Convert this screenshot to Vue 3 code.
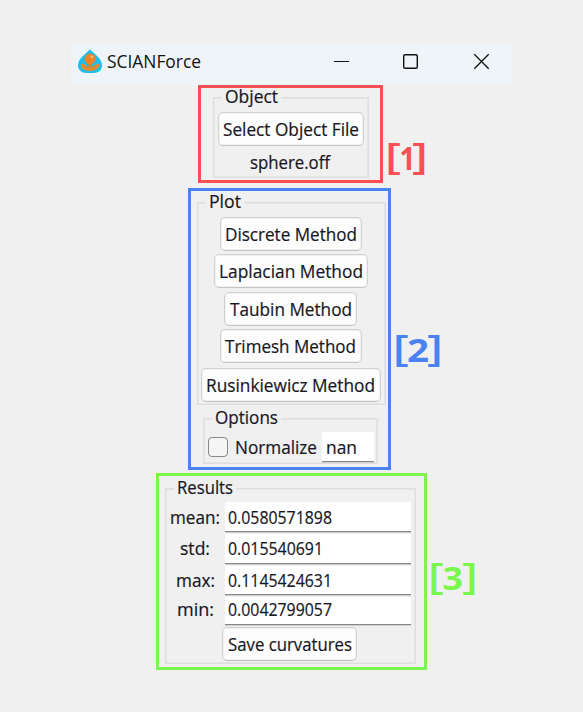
<script setup>
import { h } from 'vue'

// Text line fitted to a given width, baseline 18px below the top of a 24px line
const Line = (props) =>
  h('svg', { class: 'line', width: props.w, height: 24 }, [
    h('text', { x: 0, y: 18, textLength: props.w, lengthAdjust: 'spacingAndGlyphs' }, props.t),
  ])
Line.props = ['t', 'w']

const methods = [
  { name: 'Discrete Method', text: 132, width: 142, gap: 3 },
  { name: 'Laplacian Method', text: 144, width: 154, gap: 4 },
  { name: 'Taubin Method', text: 122, width: 133, gap: 3 },
  { name: 'Trimesh Method', text: 131, width: 142, gap: 5 },
  { name: 'Rusinkiewicz Method', text: 169, width: 180, gap: 0 },
]
const results = [
  { key: 'mean:', kw: 50, value: '0.0580571898', vw: 104, height: 32, pad: 4 },
  { key: 'std:', kw: 30, value: '0.015540691', vw: 95, height: 32, pad: 3 },
  { key: 'max:', kw: 39, value: '0.1145424631', vw: 104, height: 31, pad: 3 },
  { key: 'min:', kw: 37, value: '0.0042799057', vw: 104, height: 30, pad: 1 },
]
</script>

<template>
  <main class="page">
    <header class="titlebar">
      <svg class="logo" width="26" height="26" viewBox="0 0 26 26">
        <path d="M13 1C11.500 4 3 8.500 1.500 14.500C-.500 21 4 25 9 25h8c5 0 9.500-4 7.500-10.500C23 8.500 14.500 4 13 1Z" fill="#1cc0ee" />
        <path d="M4 16c2-1 4 .500 6 2.500h6c2-2 4-3.500 6-2.500 1 4-3 7-9 7s-10-3-9-7Z" fill="#e58d2c" />
        <path d="M11.300 14h3.400v5h-3.400Z" fill="#c98a3b" />
        <circle cx="13" cy="11" r="5.400" fill="#ee8424" />
        <path d="M7 18c2 2.300 10 2.300 12 0" fill="none" stroke="#b98a3d" stroke-width="0.800" />
        <circle cx="14.800" cy="9" r="1.400" fill="#f8b578" />
      </svg>
      <Line class="title" t="SCIANForce" :w="94" />
      <svg class="controls" width="156" height="16" viewBox="0 0 156 16">
        <path d="M0 7.500h15" />
        <rect x="69.700" y="0.700" width="13.600" height="13.600" rx="1.300" stroke-width="1.400" />
        <path d="M140.300.300l14.400 14.400M154.700.300l-14.400 14.400" stroke-width="1.300" />
      </svg>
    </header>

    <section class="row first">
      <div class="frame red">
        <div class="group object">
          <div class="legend"><Line t="Object" :w="53" /></div>
          <button class="btn select"><Line t="Select Object File" :w="136" /></button>
          <Line class="file" t="sphere.off" :w="80" />
        </div>
      </div>
      <svg class="tag tag1" width="46" height="40">
        <text class="br" x="-2" y="29" textLength="16" lengthAdjust="spacingAndGlyphs">[</text>
        <text x="12.500" y="30" textLength="16" lengthAdjust="spacingAndGlyphs">1</text>
        <text class="br" x="25" y="29" textLength="16" lengthAdjust="spacingAndGlyphs">]</text>
      </svg>
    </section>

    <section class="row second">
      <div class="frame blue">
        <div class="group plot">
          <div class="legend"><Line t="Plot" :w="32" /></div>
          <button v-for="m in methods" :key="m.name" class="btn method" :style="{ width: m.width + 'px', marginBottom: m.gap + 'px' }">
            <Line :t="m.name" :w="m.text" />
          </button>
        </div>
        <div class="group options">
          <div class="legend"><Line t="Options" :w="63" /></div>
          <span class="check"></span>
          <Line class="normalize" t="Normalize" :w="82" />
          <div class="field nan"><Line t="nan" :w="31" /></div>
        </div>
      </div>
      <svg class="tag tag2" width="50" height="40">
        <text class="br" x="-1.200" y="29" textLength="16" lengthAdjust="spacingAndGlyphs">[</text>
        <text x="13" y="30" textLength="22" lengthAdjust="spacingAndGlyphs">2</text>
        <text class="br" x="33" y="29" textLength="16" lengthAdjust="spacingAndGlyphs">]</text>
      </svg>
    </section>

    <section class="row third">
      <div class="frame green">
        <div class="group results">
          <div class="legend"><Line t="Results" :w="56" /></div>
          <div v-for="r in results" :key="r.key" class="result" :style="{ height: r.height + 'px', '--pad': r.pad + 'px' }">
            <div class="key"><Line :t="r.key" :w="r.kw" /></div>
            <div class="field"><Line :t="r.value" :w="r.vw" /></div>
          </div>
          <button class="btn save"><Line t="Save curvatures" :w="124" /></button>
        </div>
      </div>
      <svg class="tag tag3" width="50" height="40">
        <text class="br" x="-1.200" y="29" textLength="16" lengthAdjust="spacingAndGlyphs">[</text>
        <text x="13.500" y="30" textLength="20.500" lengthAdjust="spacingAndGlyphs">3</text>
        <text class="br" x="33" y="29" textLength="16" lengthAdjust="spacingAndGlyphs">]</text>
      </svg>
    </section>
  </main>
</template>

<style>
body { background: #f0f0f0; }
.line { display: block; flex: none; overflow: visible; }
.line text { font-family: "Open Sans", "Noto Sans", sans-serif; font-size: 18px; fill: #17171f; stroke: #17171f; stroke-width: 0.2px; }
.title text { stroke: none; fill: #111; }
.legend .line { margin-top: -10px; }
</style>

<style scoped>
.page { box-sizing: border-box; width: 583px; height: 712px; padding-top: 42px; background: #f0f0f0; overflow: hidden; }
.titlebar { display: flex; box-sizing: border-box; width: 441px; height: 43px; margin-left: 71px; padding-left: 6px; background: #eff4f8; box-shadow: 0 1px #eff3f6; }
.logo { margin-top: 6px; }
.title { margin: 8px 0 0 4px; }
.controls { margin: 12px 0 0 133px; fill: none; stroke: #111; stroke-width: 1; overflow: visible; }
.row { display: flex; align-items: flex-start; position: relative; }
.first { margin-left: 198px; height: 103px; }
.second { margin-left: 188px; height: 285px; }
.third { margin-left: 156px; }
.frame { box-sizing: border-box; border: 3px solid; flex: none; }
.red { width: 185px; height: 98px; border-color: #fa4f55; padding: 9px 0 0 12px; }
.blue { width: 203px; height: 282px; border-color: #4b82f3; padding: 11px 0 0 6px; }
.green { width: 271px; height: 197px; border-color: #7bf64c; padding: 12px 0 0 6px; }
.group { box-sizing: border-box; position: relative; border: 1px solid #dedede; box-shadow: inset 0 0 0 1px #e6e6e6; display: flex; flex-direction: column; align-items: center; }
.legend { position: absolute; left: 8px; top: -3px; padding: 0 3px; background: #f0f0f0; height: 6px; }
.object { width: 156px; height: 81px; padding-top: 14px; }
.plot { width: 189px; height: 203px; padding-top: 14px; }
.options { width: 175px; height: 46px; margin: 13px 0 0 6px; flex-direction: row; align-items: flex-start; }
.results { width: 251px; height: 176px; padding-top: 13px; align-items: flex-start; }
.btn { box-sizing: border-box; flex: none; display: flex; justify-content: center; height: 34px; margin: 0; padding: 5px 0 0; border: 1px solid #d2d2d2; border-bottom-color: #c3c3c3; border-radius: 5px; background: #fdfdfd; box-shadow: inset 0 0 0 1px #f1f1f1; }
.method { margin-right: 2px; }
.select { width: 146px; }
.file { margin: 5px 2px 0 0; }
.check { box-sizing: border-box; width: 20px; height: 20px; margin: 18px 0 0 4px; border: 1.500px solid #888; border-radius: 4px; background: #f5f5f5; }
.normalize { margin: 17px 0 0 7px; }
.field { box-sizing: border-box; width: 186px; height: calc(100% - 2px); padding: var(--pad, 4px) 0 0 3px; background: #fff; border-bottom: 1px solid #888; box-shadow: 0 1px #cfcfcf; }
.nan { width: 52px; height: 30px; margin: 13px 0 0 5px; padding-left: 4px; }
.result { display: flex; flex: none; }
.key { display: flex; justify-content: center; width: 59px; padding: var(--pad) 1px 0 0; box-sizing: border-box; }
.save { width: 135px; margin-left: 56px; }
.tag { flex: none; overflow: visible; font-family: "Noto Sans", sans-serif; font-weight: 700; font-size: 32px; }
.tag .br { font-size: 37px; font-weight: 500; }
.tag1 { fill: #fa4f55; margin: 55px 0 0 4px; }
.tag2 { fill: #4b82f3; margin: 144px 0 0 3px; }
.tag3 { fill: #7bf64c; margin: 87px 0 0 2px; }
</style>
